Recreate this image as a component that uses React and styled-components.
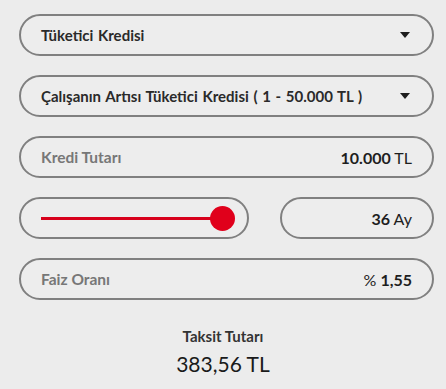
import React from "react";
import styled, { createGlobalStyle } from "styled-components";

const Global = createGlobalStyle`
  html, body { margin: 0; padding: 0; background: #ececec; }
  body { font-family: "Lato", "Noto Sans", sans-serif; }
`;

const Page = styled.div`
  width: 446px;
  height: 389px;
  box-sizing: border-box;
  padding: 14px 12px 0 19px;
  display: flex;
  flex-direction: column;
  gap: 19px;
  background: #ececec;
`;

const Pill = styled.div`
  box-sizing: border-box;
  height: 42px;
  border: 2px solid #808080;
  border-radius: 21px;
  display: flex;
  align-items: center;
  justify-content: ${(p) => p.$justify || "space-between"};
  padding: 0 20px;
  background: #ededed;
  flex: ${(p) => p.$flex || "none"};
  width: ${(p) => p.$width || "auto"};
`;

const Row = styled.div`
  display: flex;
  gap: 31px;
`;

const SelectText = styled.span`
  font-size: 15px;
  font-weight: 700;
  color: #2a2a2a;
  word-spacing: 1px;
`;

const Caret = styled.span`
  width: 0;
  height: 0;
  border-left: 5.5px solid transparent;
  border-right: 5.5px solid transparent;
  border-top: 6px solid #1e1e1e;
  margin-right: 2px;
`;

const Label = styled.span`
  font-size: 15.5px;
  font-weight: 700;
  color: #777;
`;

const Value = styled.span`
  font-size: 16px;
  color: #1e1e1e;
`;

const Strong = styled.b`
  font-weight: 700;
`;

const Track = styled.div`
  position: relative;
  flex: 1;
  height: 3px;
  background: #d7001b;
`;

const Thumb = styled.div`
  position: absolute;
  right: -12px;
  top: 50%;
  width: 25px;
  height: 25px;
  margin-top: -12.5px;
  border-radius: 50%;
  background: #e0001b;
`;

const SliderPill = styled(Pill)`
  padding: 0 24px 0 20px;
`;

const Result = styled.div`
  display: flex;
  flex-direction: column;
  align-items: center;
  margin-top: 8px;
  margin-right: -12px;
  margin-left: -19px;
  gap: 6px;
`;

const ResultLabel = styled.div`
  font-size: 15px;
  font-weight: 700;
  color: #333;
`;

const ResultValue = styled.div`
  font-size: 21px;
  color: #1a1a1a;
`;

export default function App() {
  return (
    <>
      <Global />
      <Page>
        <Pill>
          <SelectText>Tüketici Kredisi</SelectText>
          <Caret />
        </Pill>
        <Pill>
          <SelectText>Çalışanın Artısı Tüketici Kredisi ( 1 - 50.000 TL )</SelectText>
          <Caret />
        </Pill>
        <Pill>
          <Label>Kredi Tutarı</Label>
          <Value><Strong>10.000</Strong> TL</Value>
        </Pill>
        <Row>
          <SliderPill $width="230px">
            <Track>
              <Thumb />
            </Track>
          </SliderPill>
          <Pill $flex="1" $justify="flex-end">
            <Value><Strong>36</Strong> Ay</Value>
          </Pill>
        </Row>
        <Pill>
          <Label>Faiz Oranı</Label>
          <Value>% <Strong>1,55</Strong></Value>
        </Pill>
        <Result>
          <ResultLabel>Taksit Tutarı</ResultLabel>
          <ResultValue>383,56 TL</ResultValue>
        </Result>
      </Page>
    </>
  );
}
